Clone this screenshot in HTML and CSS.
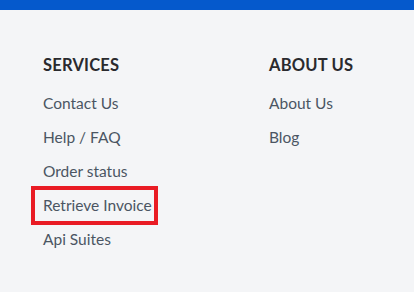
FILE: index.html
```html
<!DOCTYPE html>
<html lang="en">
<head>
<meta charset="utf-8">
<link rel="stylesheet" href="styles.css">
</head>
<body>
<div class="topbar"></div>
<footer class="footer">
  <div class="col">
    <h3 class="col-title">SERVICES</h3>
    <ul class="links">
      <li><a href="#">Contact Us</a></li>
      <li><a href="#">Help / FAQ</a></li>
      <li><a href="#">Order status</a></li>
      <li class="highlight"><a href="#">Retrieve Invoice</a></li>
      <li><a href="#">Api Suites</a></li>
    </ul>
  </div>
  <div class="col">
    <h3 class="col-title">ABOUT US</h3>
    <ul class="links">
      <li><a href="#">About Us</a></li>
      <li><a href="#">Blog</a></li>
    </ul>
  </div>
</footer>
</body>
</html>
```
FILE: styles.css
```css
html, body {
  margin: 0;
  padding: 0;
  background: #f4f5f7;
  font-family: Lato, "Liberation Sans", sans-serif;
}
.topbar {
  height: 10px;
  background: #0559cc;
}
.footer {
  display: grid;
  grid-template-columns: 226px 1fr;
  padding: 44px 0 0 43px;
  height: 282px;
  box-sizing: border-box;
}
.col-title {
  margin: 0;
  font-size: 16.5px;
  font-weight: 700;
  color: #2a2a2e;
  line-height: 22px;
  letter-spacing: 0.2px;
}
.links {
  list-style: none;
  margin: 0;
  padding: 0;
  padding-top: 16px;
  display: flex;
  flex-direction: column;
  gap: 12px;
}
.links li {
  line-height: 22px;
  height: 22px;
}
.links a {
  font-size: 15.5px;
  color: #4b5563;
  text-decoration: none;
}
.links li.highlight {
  margin-left: -12px;
  width: 127px;
  height: 39px;
  margin-top: -8px;
  margin-bottom: -9px;
  box-sizing: border-box;
  border: 4px solid #e91c24;
  padding: 4px 0 0 8px;
  line-height: 22px;
}
```
